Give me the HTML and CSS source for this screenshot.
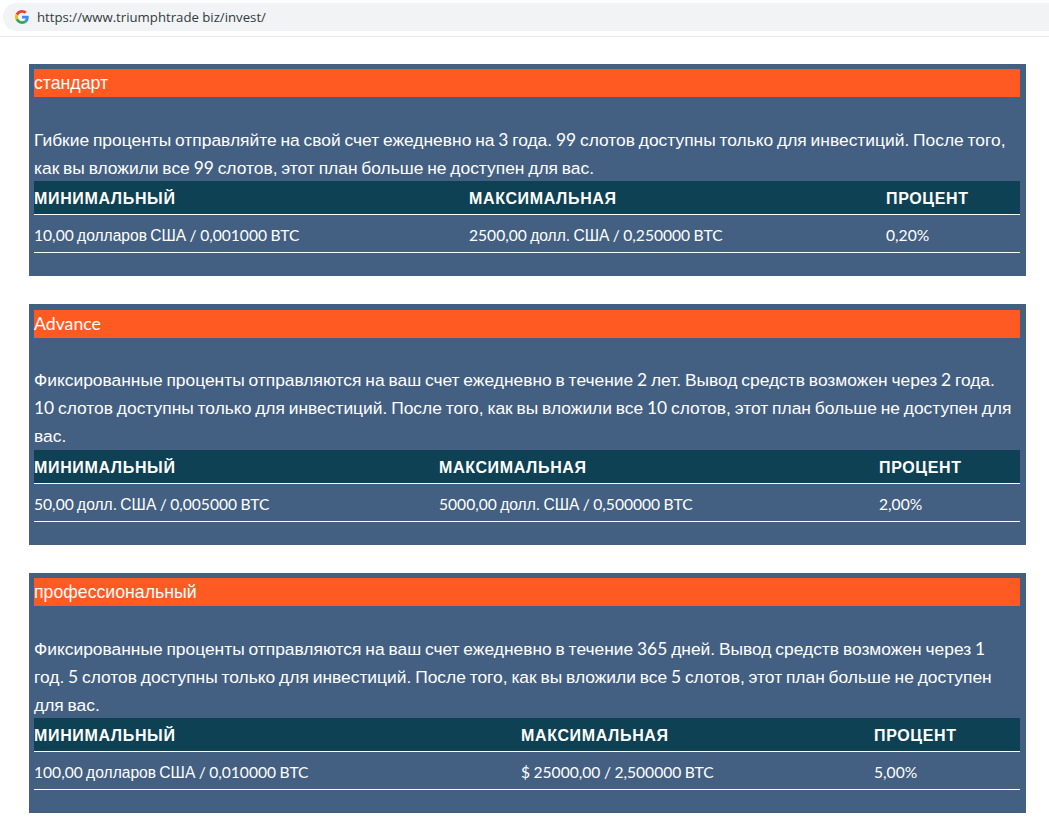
FILE: index.html
```html
<!DOCTYPE html>
<html lang="ru">
<head>
<meta charset="utf-8">
<title>Invest</title>
<link rel="stylesheet" href="styles.css">
</head>
<body>
<header class="bar">
  <div class="omnibox">
    <svg class="g-logo" width="14" height="14" viewBox="0 0 48 48"><path fill="#EA4335" d="M24 9.5c3.5 0 6.700 1.200 9.200 3.600l6.900-6.900C35.900 2.400 30.500 0 24 0 14.600 0 6.500 5.400 2.600 13.200l8 6.200C12.400 13.700 17.700 9.500 24 9.500z"/><path fill="#4285F4" d="M47 24.500c0-1.600-.1-3.100-.4-4.500H24v9h12.900c-.6 3-2.200 5.500-4.700 7.200l7.700 6c4.500-4.200 7.100-10.300 7.100-17.700z"/><path fill="#FBBC05" d="M10.600 28.600c-.5-1.400-.8-3-.8-4.600s.3-3.200.8-4.600l-8-6.200C.9 16.500 0 20.100 0 24s.9 7.500 2.600 10.800l8-6.200z"/><path fill="#34A853" d="M24 48c6.500 0 11.900-2.100 15.900-5.800l-7.700-6c-2.200 1.500-4.900 2.300-8.200 2.300-6.300 0-11.600-4.200-13.400-10l-8 6.200C6.500 42.600 14.600 48 24 48z"/></svg>
    <span class="url">https://www.triumphtrade biz/invest/</span>
  </div>
</header>
<main class="plans">
  <section class="plan">
    <h2 class="plan-title">стандарт</h2>
    <p class="plan-text">Гибкие проценты отправляйте на свой счет ежедневно на <span class="lat">3</span> года. <span class="lat">99</span> слотов доступны только для инвестиций. После того,<br>как вы вложили все <span class="lat">99</span> слотов, этот план больше не доступен для вас.</p>
    <table class="rates rates-a">
      <thead><tr><th class="c1">МИНИМАЛЬНЫЙ</th><th class="c2">МАКСИМАЛЬНАЯ</th><th class="c3">ПРОЦЕНТ</th></tr></thead>
      <tbody><tr><td><span class="lat">10,00</span> долларов США <span class="lat">/ 0,001000 BTC</span></td><td><span class="lat">2500,00</span> долл. США <span class="lat">/ 0,250000 BTC</span></td><td><span class="lat">0,20%</span></td></tr></tbody>
    </table>
  </section>
  <section class="plan plan-advance">
    <h2 class="plan-title plan-title-latin">Advance</h2>
    <p class="plan-text">Фиксированные проценты отправляются на ваш счет ежедневно в течение <span class="lat">2</span> лет. Вывод средств возможен через <span class="lat">2</span> года.<br><span class="lat">10</span> слотов доступны только для инвестиций. После того, как вы вложили все <span class="lat">10</span> слотов, этот план больше не доступен для<br>вас.</p>
    <table class="rates rates-b">
      <thead><tr><th class="c1">МИНИМАЛЬНЫЙ</th><th class="c2">МАКСИМАЛЬНАЯ</th><th class="c3">ПРОЦЕНТ</th></tr></thead>
      <tbody><tr><td><span class="lat">50,00</span> долл. США <span class="lat">/ 0,005000 BTC</span></td><td><span class="lat">5000,00</span> долл. США <span class="lat">/ 0,500000 BTC</span></td><td><span class="lat">2,00%</span></td></tr></tbody>
    </table>
  </section>
  <section class="plan">
    <h2 class="plan-title">профессиональный</h2>
    <p class="plan-text">Фиксированные проценты отправляются на ваш счет ежедневно в течение <span class="lat">365</span> дней. Вывод средств возможен через <span class="lat">1</span><br>год. <span class="lat">5</span> слотов доступны только для инвестиций. После того, как вы вложили все <span class="lat">5</span> слотов, этот план больше не доступен<br>для вас.</p>
    <table class="rates rates-c">
      <thead><tr><th class="c1">МИНИМАЛЬНЫЙ</th><th class="c2">МАКСИМАЛЬНАЯ</th><th class="c3">ПРОЦЕНТ</th></tr></thead>
      <tbody><tr><td><span class="lat">100,00</span> долларов США <span class="lat">/ 0,010000 BTC</span></td><td><span class="lat">$ 25000,00 / 2,500000 BTC</span></td><td><span class="lat">5,00%</span></td></tr></tbody>
    </table>
  </section>
</main>
</body>
</html>
```
FILE: styles.css
```css
* { box-sizing: border-box; }
html, body { margin: 0; padding: 0; background: #fff; }
body { font-family: "Liberation Sans", Arimo, sans-serif; color: #fff; overflow: hidden; }

.bar { height: 37px; padding-top: 3px; border-bottom: 1px solid #e6e7e9; background: #fff; }
.omnibox { height: 28px; margin-left: 3px; border-radius: 14px 0 0 14px; background: #f1f3f4; display: flex; align-items: center; padding-left: 12px; gap: 8px; }
.g-logo { flex: none; }
.url { font-size: 13.2px; color: #333a40; font-family: "Open Sans", "Liberation Sans", sans-serif; }

.plans { padding: 27px 23px 0 29px; display: flex; flex-direction: column; gap: 28px; }
.plan { background: #436083; padding: 5px 6px 23px 5px; }
.plan-advance { padding-top: 6px; }
.plan-title { margin: 0; height: 28px; background: #ff5a21; font-size: 17.7px; font-weight: 400; line-height: 28px; }
.plan-title-latin { font-family: Lato, sans-serif; }
.plan-text { margin: 29px 0 -1px; font-size: 17.4px; line-height: 28px; word-spacing: -1px; }
.plan-advance .plan-text { margin: 28px 0 0; }
.lat { font-family: Lato, sans-serif; line-height: 0; word-spacing: -.5px; }
.rates { width: 100%; border-collapse: collapse; table-layout: fixed; }
.rates th { height: 33px; padding: 4px 0 0; background: #0d4153; border-bottom: 1px solid #fff; font-size: 16px; font-weight: 700; letter-spacing: .65px; text-align: left; }
.rates-b th { height: 34px; }
.rates td { height: 38px; padding: 5px 0 0; border-bottom: 1px solid #fff; font-size: 15.6px; word-spacing: -1px; }
.rates-a .c1 { width: 435px; } .rates-a .c2 { width: 417px; }
.rates-b .c1 { width: 405px; } .rates-b .c2 { width: 440px; }
.rates-c .c1 { width: 487px; } .rates-c .c2 { width: 353px; }
```
